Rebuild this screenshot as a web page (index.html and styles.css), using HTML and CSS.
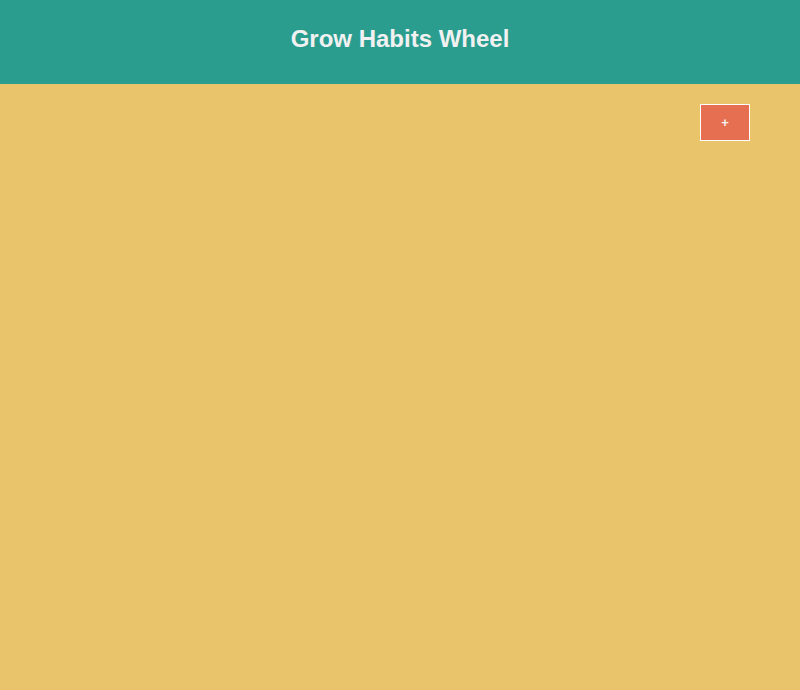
FILE: index.html
```html
<!DOCTYPE html>
<html>
<head>
<meta charset="utf-8">
<title>Grow Habits Wheel</title>
<link rel="stylesheet" href="styles.css">
</head>
<body>
<header class="header">
  <h1 class="title">Grow Habits Wheel</h1>
</header>
<main class="main">
  <div class="toolbar">
    <button class="add-btn">+</button>
  </div>
</main>
</body>
</html>
```
FILE: styles.css
```css
html, body {
  margin: 0;
  padding: 0;
  height: 100%;
}
body {
  background: #e9c46a;
  font-family: "Liberation Sans", Arial, sans-serif;
}
.header {
  background: #2a9d8f;
  height: 84px;
  display: flex;
  align-items: center;
  justify-content: center;
}
.title {
  margin: 0;
  color: #f1f1f1;
  font-size: 24px;
  font-weight: bold;
  margin-top: -6px;
}
.toolbar {
  display: flex;
  justify-content: flex-end;
  padding: 20px 50px 0 0;
}
.add-btn {
  width: 50px;
  height: 37px;
  background: #e76f51;
  border: 1px solid #ffffff;
  color: #f1f1f1;
  font-family: "Liberation Sans", Arial, sans-serif;
  font-size: 13px;
  font-weight: bold;
  padding: 0;
  cursor: pointer;
}
```
